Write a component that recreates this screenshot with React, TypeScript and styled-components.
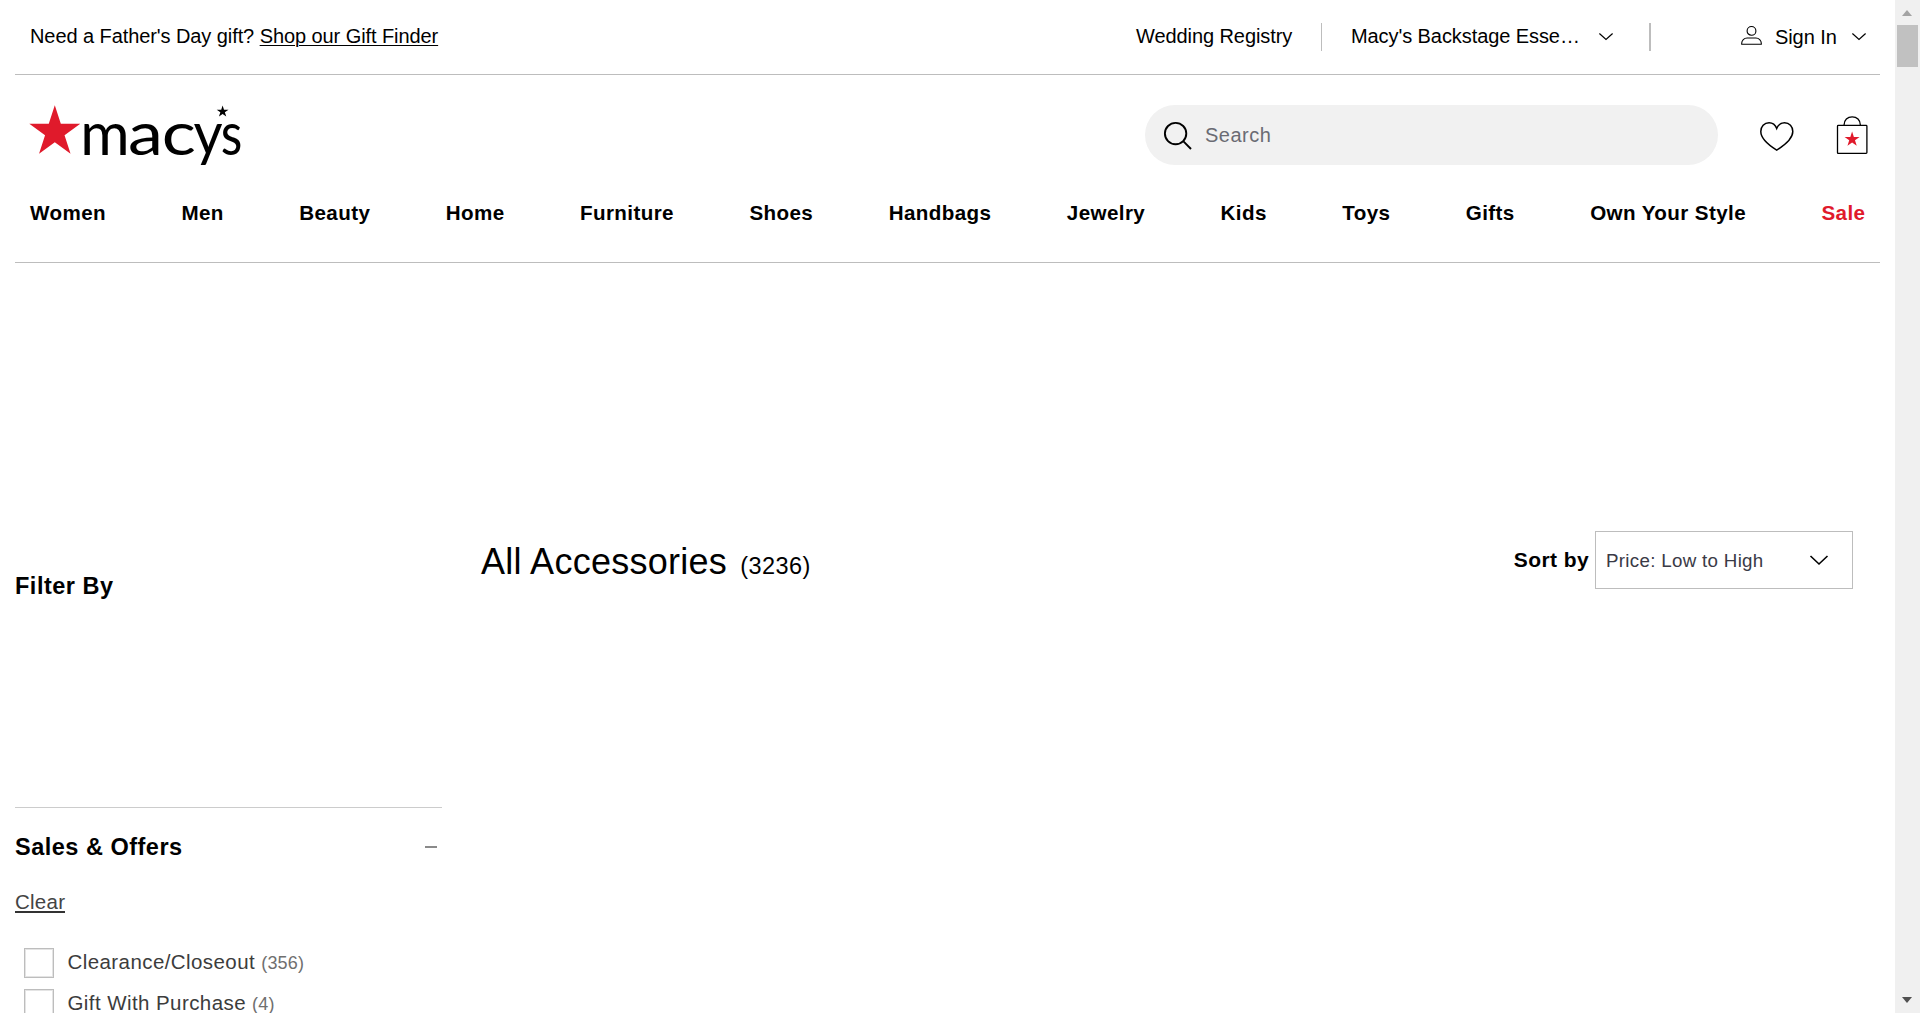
import React from "react";
import styled, { createGlobalStyle } from "styled-components";

const Global = createGlobalStyle`
  * { box-sizing: border-box; }
  html, body { margin: 0; padding: 0; background: #fff; overflow: hidden; }
  body { font-family: "Liberation Sans", Arial, sans-serif; color: #000; }
`;

const Shell = styled.div`
  display: flex;
  width: 1920px;
  height: 1013px;
  overflow: hidden;
`;

const Page = styled.div`
  flex: 1;
  min-width: 0;
  height: 1013px;
  padding: 0 15px;
  overflow: hidden;
`;

const TopBar = styled.div`
  display: flex;
  align-items: flex-start;
  height: 75px;
  padding: 23px 14px 0 15px;
  border-bottom: 1px solid #bdbdbd;
`;

const TopText = styled.span<{ $w?: number; $drop?: number }>`
  font-size: 20px;
  line-height: 26px;
  letter-spacing: -0.08px;
  white-space: nowrap;
  width: ${(p) => (p.$w ? p.$w + "px" : "auto")};
  margin-top: ${(p) => p.$drop ?? 0}px;
`;

const GiftLink = styled.a`
  color: inherit;
  text-decoration: underline;
  text-decoration-thickness: 1px;
  text-underline-offset: 2px;
`;

const Spacer = styled.div`
  flex: 1;
`;

const Divider = styled.i<{ $w: number; $l: number; $r: number }>`
  width: ${(p) => p.$w}px;
  height: 28px;
  background: #bdbdbd;
  margin: 0 ${(p) => p.$r}px 0 ${(p) => p.$l}px;
`;

const Icon = styled.svg<{ $mt?: number; $ml?: number; $mr?: number }>`
  display: block;
  flex: none;
  overflow: visible;
  fill: none;
  stroke: #000;
  margin: ${(p) => p.$mt ?? 0}px ${(p) => p.$mr ?? 0}px 0 ${(p) => p.$ml ?? 0}px;
`;

const BrandRow = styled.div`
  display: flex;
  height: 60px;
  margin-top: 30px;
  padding: 0 12px 0 14px;
`;

const WordmarkLetter = styled.text`
  font-family: Lato, "Liberation Sans", sans-serif;
  font-size: 60px;
  fill: #000;
  stroke: none;
`;

const SearchBox = styled.div`
  display: flex;
  width: 573px;
  height: 60px;
  border-radius: 30px;
  background: #f1f1f1;
  padding-left: 19px;
  margin-right: 42px;
`;

const SearchText = styled.span`
  margin-left: 13px;
  font-size: 20px;
  line-height: 60px;
  letter-spacing: 0.5px;
  color: #6a6b73;
`;

const Nav = styled.nav`
  display: flex;
  justify-content: space-between;
  height: 98px;
  padding: 34px 14.5px 0 15px;
  border-bottom: 1px solid #bdbdbd;
`;

const NavItem = styled.a<{ $sale?: boolean }>`
  font-size: 20.6px;
  font-weight: 700;
  line-height: 28px;
  letter-spacing: 0.4px;
  white-space: nowrap;
  color: ${(p) => (p.$sale ? "#e01a2b" : "#000")};
`;

const Content = styled.main`
  display: flex;
  height: 750px;
`;

const Sidebar = styled.aside`
  width: 427px;
  padding-top: 308px;
`;

const SideTitle = styled.h2`
  margin: 0;
  font-size: 23.5px;
  font-weight: 700;
  line-height: 30px;
  letter-spacing: 0.5px;
`;

const Facet = styled.section`
  margin-top: 206px;
  border-top: 1px solid #ccc;
  padding-top: 24px;
`;

const FacetHead = styled.div`
  display: flex;
  justify-content: space-between;
  align-items: center;
  height: 30px;
  padding-right: 5px;
`;

const Minus = styled.i`
  width: 12px;
  height: 2px;
  background: #8a8a8a;
`;

const Clear = styled.a`
  display: block;
  width: 50px;
  height: 25px;
  margin-top: 26px;
  border-bottom: 2px solid #333;
  font-size: 20.5px;
  line-height: 28px;
  letter-spacing: 0.25px;
  color: #444;
`;

const Options = styled.div`
  display: grid;
  gap: 11px;
  padding: 35px 0 0 9px;
`;

const Option = styled.label`
  display: flex;
  height: 30px;
  white-space: nowrap;
`;

const Box = styled.i`
  width: 30px;
  height: 30px;
  border: 1px solid #bdbdbd;
  box-shadow: inset 0 0 0 1px #e4e4e4;
  margin-right: 13.5px;
`;

const OptionText = styled.span`
  font-size: 20.5px;
  line-height: 27px;
  letter-spacing: 0.42px;
  color: #3c3c3c;
`;

const OptionCount = styled.small`
  font-size: 18px;
  letter-spacing: 0.15px;
  color: #6f6f6f;
`;

const Results = styled.section`
  flex: 1;
  display: flex;
  justify-content: space-between;
  align-items: flex-start;
  padding: 268px 27px 0 39px;
`;

const Heading = styled.h1`
  margin: 9px 0 0;
  font-size: 36px;
  font-weight: 400;
  line-height: 44px;
  letter-spacing: 0.27px;
  white-space: nowrap;
`;

const Total = styled.span`
  margin-left: 13px;
  font-size: 23.5px;
  letter-spacing: 0.45px;
`;

const Sort = styled.div`
  display: flex;
`;

const SortLabel = styled.span`
  margin-right: 6px;
  font-size: 21px;
  font-weight: 700;
  line-height: 57px;
  letter-spacing: 0.4px;
`;

const Select = styled.div`
  display: flex;
  width: 258px;
  height: 58px;
  border: 1px solid #bdbdbd;
  padding-left: 10px;
  justify-content: space-between;
`;

const SelectText = styled.span`
  font-size: 18.75px;
  line-height: 58px;
  letter-spacing: 0.3px;
  color: #3a3a46;
`;

const Scrollbar = styled.div`
  display: flex;
  flex-direction: column;
  justify-content: space-between;
  width: 25px;
  height: 1013px;
  background: #f0f0f0;
  padding: 10px 2px 10px;
`;

const ScrollTop = styled.div`
  display: flex;
  flex-direction: column;
  gap: 9px;
`;

const Thumb = styled.div`
  height: 42px;
  background: #c1c1c1;
`;

const Arrow = styled.i<{ $down?: boolean }>`
  width: 0;
  height: 0;
  margin-left: 5px;
  border: 0 solid transparent;
  border-width: ${(p) => (p.$down ? "6px 5.5px 0" : "0 5.5px 6px")};
  border-top-color: ${(p) => (p.$down ? "#505050" : "transparent")};
  border-bottom-color: ${(p) => (p.$down ? "transparent" : "#a3a3a3")};
`;

const star = (cx: number, cy: number, r: number, k = 0.382) =>
  Array.from({ length: 10 }, (_, i) => {
    const a = (-90 + i * 36) * (Math.PI / 180);
    const q = i % 2 ? r * k : r;
    return `${(cx + q * Math.cos(a)).toFixed(2)},${(cy + q * Math.sin(a)).toFixed(2)}`;
  }).join(" ");

/* letter, left edge, horizontal stretch */
const wordmark: [string, number, number][] = [
  ["m", 51.3, 1],
  ["a", 99, 1.17],
  ["c", 132.7, 1.19],
  ["y", 164.5, 0.94],
  ["s", 191.8, 0.83],
];

const nav = [
  "Women", "Men", "Beauty", "Home", "Furniture", "Shoes", "Handbags",
  "Jewelry", "Kids", "Toys", "Gifts", "Own Your Style", "Sale",
];

const offers: [string, number][] = [
  ["Clearance/Closeout", 356],
  ["Gift With Purchase", 4],
];

const Chevron = ({ mt, ml }: { mt: number; ml: number }) => (
  <Icon width="14" height="8" $mt={mt} $ml={ml} strokeWidth="1.2">
    <path d="M.4 .5 7 6.5 13.6 .5" />
  </Icon>
);

export default function App() {
  return (
    <Shell>
      <Global />
      <Page>
        <TopBar>
          <TopText>
            Need a Father's Day gift? <GiftLink>Shop our Gift Finder</GiftLink>
          </TopText>
          <Spacer />
          <TopText $w={156}>Wedding Registry</TopText>
          <Divider $w={1} $l={29} $r={29} />
          <TopText $w={228}>Macy's Backstage Esse…</TopText>
          <Chevron mt={10} ml={20} />
          <Divider $w={2} $l={36} $r={90} />
          <Icon width="21" height="19" $mt={3} $mr={13} strokeWidth="1.1">
            <circle cx="10.5" cy="4.9" r="4.4" />
            <path d="M.7 18.3h19.6v-1c0-3-2.4-5.3-5.4-5.3H6.1c-3 0-5.4 2.3-5.4 5.3z" />
          </Icon>
          <TopText $w={62} $drop={1}>Sign In</TopText>
          <Chevron mt={10} ml={15} />
        </TopBar>

        <BrandRow>
          <Icon width="213" height="60" role="img" aria-label="macys">
            <polygon points={star(25.8, 27, 26.8)} fill="#e01a2b" stroke="none" />
            {wordmark.map(([ch, x, sx]) => (
              <WordmarkLetter key={ch} transform={`translate(${x} 49.5) scale(${sx} 1)`}>
                {ch}
              </WordmarkLetter>
            ))}
            <polygon points={star(193.6, 6.6, 6.2)} fill="#000" stroke="none" />
          </Icon>
          <Spacer />
          <SearchBox>
            <Icon width="28" height="28" $mt={17} strokeWidth="1.9">
              <circle cx="11.6" cy="11.6" r="10.7" />
              <path d="M19.2 19.2 27 27" />
            </Icon>
            <SearchText>Search</SearchText>
          </SearchBox>
          <Icon width="34" height="30" $mt={17} $mr={43} strokeWidth="1.5">
            <path d="M16.7 6.4C15.2 2.6 12.4.8 9.1.8 4.2.8.8 4.7.8 9.5c0 7.5 7.7 13.5 15.9 18.6C24.9 23 32.8 17 32.8 9.5c0-4.8-3.4-8.7-8.3-8.7-3.3 0-6.2 1.8-7.8 5.6z" />
          </Icon>
          <Icon width="31" height="38" $mt={11} strokeWidth="1.3">
            <rect x=".5" y="9.4" width="29.4" height="28" rx=".8" />
            <path d="M7 9.2C7 4 10.6.8 15.2.8s8.2 3.2 8.2 8.4" />
            <polygon points={star(15.1, 23.4, 7.9)} fill="#e01a2b" stroke="none" />
          </Icon>
        </BrandRow>

        <Nav>
          {nav.map((n) => (
            <NavItem key={n} $sale={n === "Sale"}>{n}</NavItem>
          ))}
        </Nav>

        <Content>
          <Sidebar>
            <SideTitle>Filter By</SideTitle>
            <Facet>
              <FacetHead>
                <SideTitle>Sales &amp; Offers</SideTitle>
                <Minus />
              </FacetHead>
              <Clear>Clear</Clear>
              <Options>
                {offers.map(([name, count]) => (
                  <Option key={name}>
                    <Box />
                    <OptionText>
                      {name} <OptionCount>({count})</OptionCount>
                    </OptionText>
                  </Option>
                ))}
              </Options>
            </Facet>
          </Sidebar>
          <Results>
            <Heading>
              All Accessories<Total>(3236)</Total>
            </Heading>
            <Sort>
              <SortLabel>Sort by</SortLabel>
              <Select>
                <SelectText>Price: Low to High</SelectText>
                <Icon width="18" height="10" $mt={23} $mr={24} strokeWidth="1.6">
                  <path d="M.5 1 9 9 17.5 1" />
                </Icon>
              </Select>
            </Sort>
          </Results>
        </Content>
      </Page>
      <Scrollbar>
        <ScrollTop>
          <Arrow />
          <Thumb />
        </ScrollTop>
        <Arrow $down />
      </Scrollbar>
    </Shell>
  );
}
